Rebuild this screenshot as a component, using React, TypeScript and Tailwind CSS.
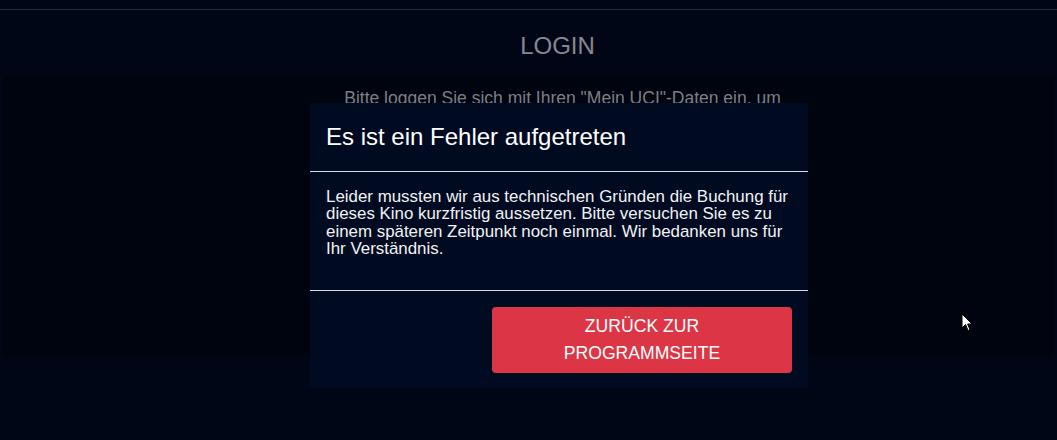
export default function App() {
  return (
    <div className="relative h-[440px] w-[1057px] overflow-hidden bg-[#010616] font-['Liberation_Sans',Arial,sans-serif]">
      {/* page behind the overlay */}
      <div className="h-[9px]" />
      <div className="h-px bg-[#262b39]" />
      <div className="flex flex-col items-center pt-[24px]">
        <h1 className="ml-[58px] text-[24px] leading-[24px] text-[#858891]">LOGIN</h1>
      </div>
      <div className="mx-[3px] mt-[18px] h-[281px] bg-[#00040e]">
        <p className="ml-[68px] pt-[12px] text-center text-[17.5px] leading-[20px] text-[#7c7f86]">
          Bitte loggen Sie sich mit Ihren &quot;Mein UCI&quot;-Daten ein, um
        </p>
      </div>

      {/* modal */}
      <div className="absolute left-[310px] top-[103px] w-[498px] rounded-[3px] bg-[#000b22] text-white">
        <div className="border-b border-[#d8dbe0] px-4 py-4">
          <h5 className="text-[24px] leading-[36px]">Es ist ein Fehler aufgetreten</h5>
        </div>
        <div className="border-b border-[#d8dbe0] p-4">
          <p className="mb-4 text-[16.9px] leading-[17.4px] text-[#f2f2f2]">
            Leider mussten wir aus technischen Gründen die Buchung für dieses Kino kurzfristig aussetzen.
            Bitte versuchen Sie es zu einem späteren Zeitpunkt noch einmal. Wir bedanken uns für Ihr Verständnis.
          </p>
        </div>
        <div className="flex justify-end px-4 pb-[15px] pt-4">
          <button className="w-[300px] rounded-[4px] bg-[#dc3545] px-3 py-[6px] text-center text-[17.6px] leading-[27px] text-white">
            ZURÜCK ZUR
            <br />
            PROGRAMMSEITE
          </button>
        </div>
      </div>

      {/* mouse pointer */}
      <svg className="absolute left-[961px] top-[313px]" width="12" height="19" viewBox="0 0 12 19">
        <path d="M1 1 L1 15 L4.5 11.5 L7 17.5 L9 16.7 L6.6 11 L11 11 Z" fill="#ffffff" stroke="#000000" strokeWidth="1" />
      </svg>
    </div>
  )
}
